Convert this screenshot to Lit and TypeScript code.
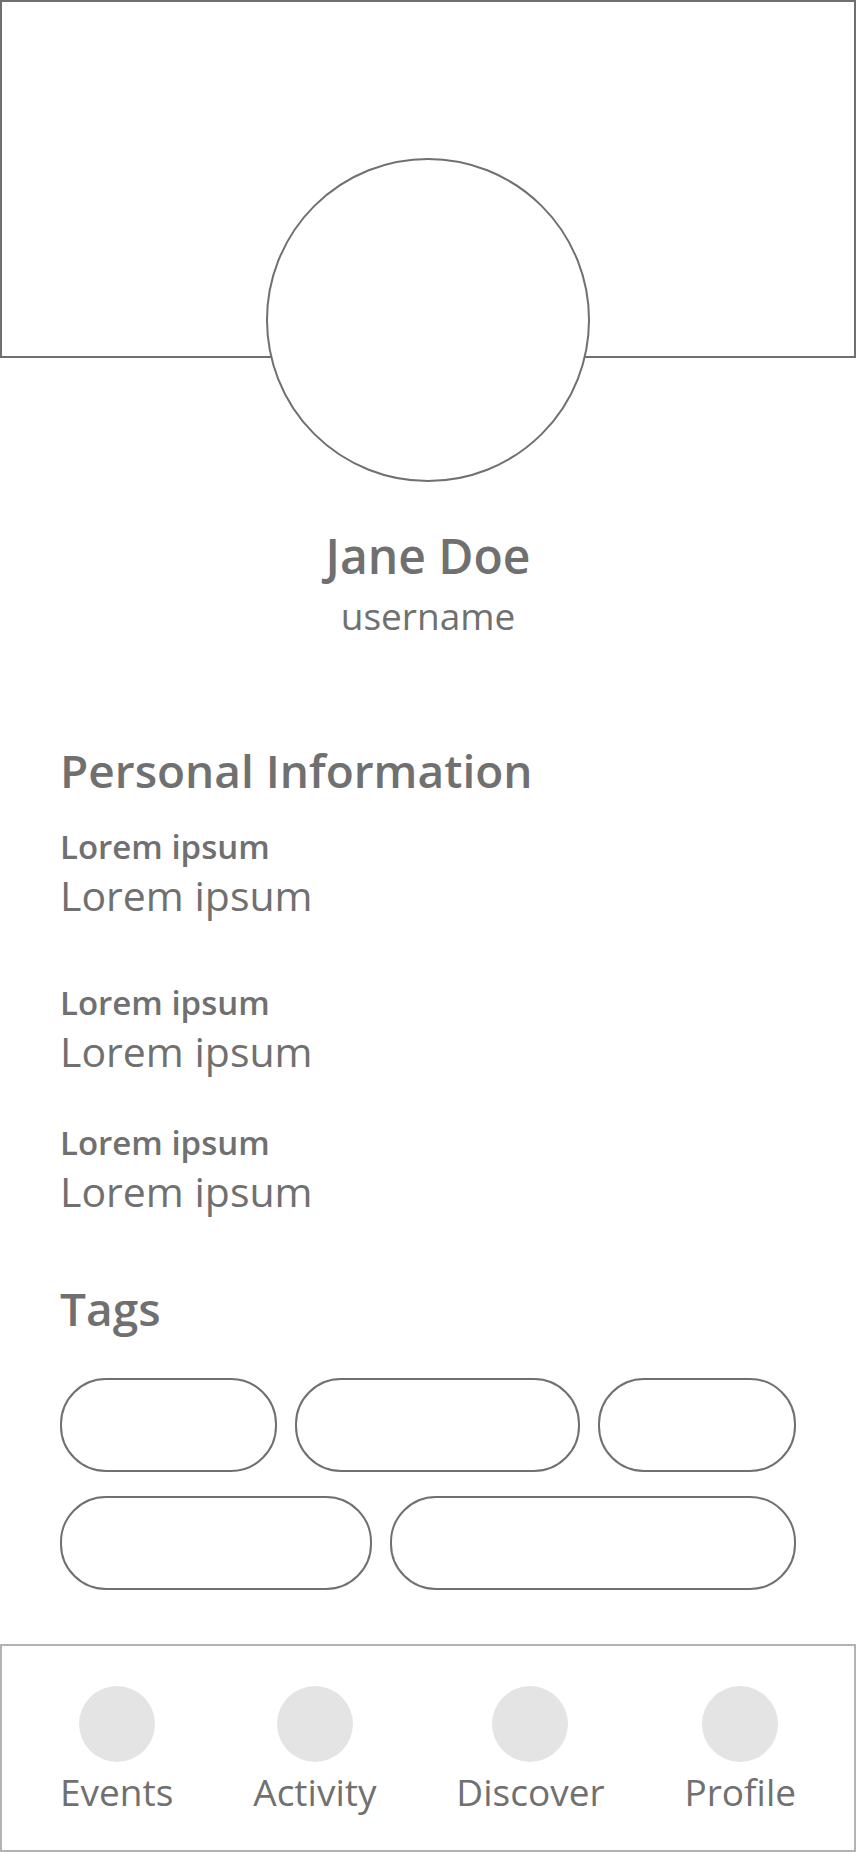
import { LitElement, html, css } from "lit";
import { customElement } from "lit/decorators.js";
import { styleMap } from "lit/directives/style-map.js";

interface Field {
  label: string;
  value: string;
  spacious?: boolean;
}

const FIELDS: Field[] = [
  { label: "Lorem ipsum", value: "Lorem ipsum", spacious: true },
  { label: "Lorem ipsum", value: "Lorem ipsum" },
  { label: "Lorem ipsum", value: "Lorem ipsum" },
];

// Relative widths of the tag pills, row by row.
const TAG_ROWS: number[][] = [
  [217, 285, 198],
  [312, 406],
];

const NAV_ITEMS = ["Events", "Activity", "Discover", "Profile"];

@customElement("app-root")
export class AppRoot extends LitElement {
  static styles = css`
    :host {
      --ink: #707070;
      display: flex;
      flex-direction: column;
      min-height: 100vh;
      background: #fff;
      color: var(--ink);
      font-family: "Open Sans", "Noto Sans", sans-serif;
    }
    *,
    *::before {
      box-sizing: border-box;
    }
    h1,
    h2,
    p,
    dl,
    dd,
    ul {
      margin: 0;
      padding: 0;
    }
    .cover {
      height: 358px;
      border: 2px solid var(--ink);
    }
    .identity {
      display: flex;
      flex-direction: column;
      align-items: center;
      margin-top: -200px;
    }
    .avatar {
      width: 324px;
      height: 324px;
      margin-bottom: 40px;
      border: 2px solid var(--ink);
      border-radius: 50%;
      background: #fff;
    }
    .name,
    .heading {
      line-height: 68px;
      font-weight: 600;
    }
    .name {
      font-size: 48px;
    }
    .heading {
      font-size: 46px;
    }
    .username {
      font-size: 37px;
      line-height: 52px;
    }
    .section {
      padding: 0 60px;
    }
    .info {
      margin-top: 94px;
    }
    .tags {
      margin-top: 56px;
      margin-bottom: 54px;
    }
    .fields {
      display: flex;
      flex-direction: column;
      gap: 44px;
      margin-top: 22px;
    }
    .spacious {
      padding-bottom: 16px;
    }
    .label {
      font-size: 33px;
      line-height: 42px;
      font-weight: 600;
    }
    .value {
      font-size: 41px;
      line-height: 54px;
    }
    .rows {
      display: flex;
      flex-direction: column;
      gap: 24px;
      margin-top: 36px;
    }
    .row {
      display: grid;
      gap: 18px;
      list-style: none;
    }
    .tag {
      height: 94px;
      border: 2px solid var(--ink);
      border-radius: 46px;
    }
    .nav {
      display: flex;
      justify-content: space-between;
      margin-top: auto;
      padding: 40px 58px 32px;
      border: 2px solid #b2b2b2;
    }
    .link {
      display: flex;
      flex-direction: column;
      align-items: center;
      gap: 4px;
      color: inherit;
      font-size: 37px;
      line-height: 52px;
      text-decoration: none;
    }
    .dot {
      width: 76px;
      height: 76px;
      border-radius: 50%;
      background: #e4e4e4;
    }
  `;

  render() {
    return html`
      <div class="cover"></div>
      <header class="identity">
        <div class="avatar"></div>
        <h1 class="name">Jane Doe</h1>
        <p class="username">username</p>
      </header>
      <section class="section info">
        <h2 class="heading">Personal Information</h2>
        <dl class="fields">
          ${FIELDS.map(
            (field) => html`
              <div class=${field.spacious ? "spacious" : ""}>
                <dt class="label">${field.label}</dt>
                <dd class="value">${field.value}</dd>
              </div>
            `
          )}
        </dl>
      </section>
      <section class="section tags">
        <h2 class="heading">Tags</h2>
        <div class="rows">
          ${TAG_ROWS.map(
            (row) => html`
              <ul
                class="row"
                style=${styleMap({ gridTemplateColumns: row.map((w) => `${w}fr`).join(" ") })}
              >
                ${row.map(() => html`<li class="tag"></li>`)}
              </ul>
            `
          )}
        </div>
      </section>
      <nav class="nav">
        ${NAV_ITEMS.map(
          (name) => html`
            <a class="link" href="#${name.toLowerCase()}">
              <span class="dot"></span>
              <span>${name}</span>
            </a>
          `
        )}
      </nav>
    `;
  }
}
